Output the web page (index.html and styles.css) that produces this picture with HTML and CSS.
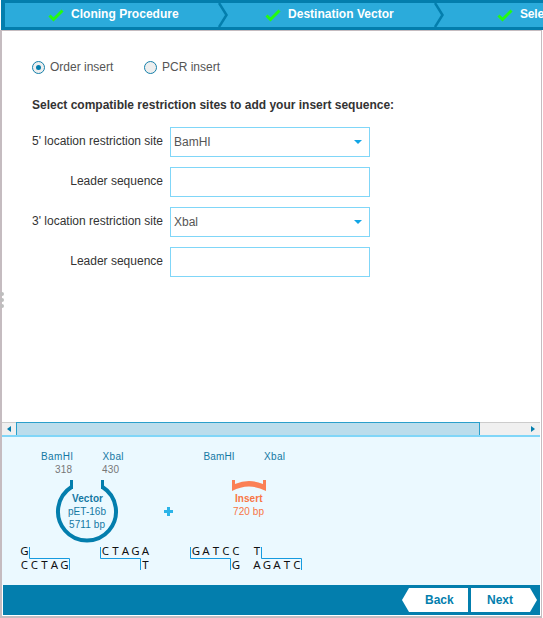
FILE: index.html
```
<!DOCTYPE html>
<html lang="en">
<head>
<meta charset="utf-8">
<title>Cloning Wizard</title>
<link rel="stylesheet" href="styles.css">
</head>
<body>
<div class="wizard">
  <header class="steps">
    <div class="step step-first">
      <svg class="check" viewBox="0 0 16 13"><path d="M1.5 6.5 5.5 10.5 14.5 1.5"/></svg>
      <span class="step-name name-cloning">Cloning Procedure</span>
      <svg class="chevron" viewBox="0 0 10 24"><path d="M1 0 8.5 12 1 24"/></svg>
    </div>
    <div class="step step-second">
      <svg class="check" viewBox="0 0 16 13"><path d="M1.5 6.5 5.5 10.5 14.5 1.5"/></svg>
      <span class="step-name name-vector">Destination Vector</span>
      <svg class="chevron" viewBox="0 0 10 24"><path d="M1 0 8.5 12 1 24"/></svg>
    </div>
    <div class="step step-third">
      <svg class="check" viewBox="0 0 16 13"><path d="M1.5 6.5 5.5 10.5 14.5 1.5"/></svg>
      <span class="step-name name-select">Sele</span>
    </div>
  </header>
  <div class="frame">
    <main class="form">
      <div class="options">
        <label class="option option-order"><span class="radio radio-on"></span><span>Order insert</span></label>
        <label class="option option-pcr"><span class="radio"></span><span>PCR insert</span></label>
      </div>
      <h1 class="prompt">Select compatible restriction sites to add your insert sequence:</h1>
      <div class="fields">
        <span class="label site">5' location restriction site</span>
        <div class="field"><span class="value">BamHI</span><i class="caret"></i></div>
        <span class="label leader">Leader sequence</span>
        <div class="field"></div>
        <span class="label site">3' location restriction site</span>
        <div class="field"><span class="value">Xbal</span><i class="caret"></i></div>
        <span class="label leader">Leader sequence</span>
        <div class="field"></div>
      </div>
    </main>
    <div class="scrollbar">
      <div class="arrow"><svg viewBox="0 0 4 6"><path d="M4 0v6L0 3z"/></svg></div>
      <div class="thumb"></div>
      <div class="track"></div>
      <div class="arrow arrow-right"><svg viewBox="0 0 4 6"><path d="M0 0v6l4-3z"/></svg></div>
    </div>
    <svg class="diagram" viewBox="2 437 538 148">
      <g class="blue">
        <text x="41" y="460" textLength="32">BamHI</text>
        <text x="102.500" y="460" textLength="21">Xbal</text>
        <text x="203.500" y="460" textLength="31">BamHI</text>
        <text x="264" y="460" textLength="21">Xbal</text>
        <text class="strong" x="72" y="502" textLength="31">Vector</text>
        <text x="68" y="515" textLength="38">pET-16b</text>
        <text x="69" y="528" textLength="36">5711 bp</text>
      </g>
      <g class="gray">
        <text x="55" y="473" textLength="17">318</text>
        <text x="102" y="473" textLength="17">430</text>
      </g>
      <path class="plasmid" d="M71.500 487A29 29 0 1 0 102.500 487"/>
      <path class="legs" d="M71.500 480V489M102.500 480V489"/>
      <path class="plus" d="M164 511.500H173M168.500 507V516"/>
      <path class="insert" d="M232 480h3v4q14-6 28 0v-4h3v11q-17-9-34 0z"/>
      <g class="orange">
        <text class="strong" x="235" y="502" textLength="27.500">Insert</text>
        <text x="233" y="515" textLength="31">720 bp</text>
      </g>
      <path class="cut" d="M29.500 547V558.500H69.500V570M100.500 547V558.500H140.500V570M190.500 547V558.500H230.500V570M261.500 547V558.500H301.500V570"/>
      <g class="bases">
        <text x="24.500" y="555">G</text>
        <text x="24.500 34.500 44.500 54.500 64.500" y="569">CCTAG</text>
        <text x="105.500 115.500 125.500 135.500 145.500" y="555">CTAGA</text>
        <text x="145.500" y="569">T</text>
        <text x="196 206 216 226 236" y="555">GATCC</text>
        <text x="236" y="569">G</text>
        <text x="257" y="555">T</text>
        <text x="257 267 277 287 297" y="569">AGATC</text>
      </g>
    </svg>
    <footer class="actions">
      <div class="button back"><span>Back</span></div>
      <div class="button next"><span>Next</span></div>
    </footer>
  </div>
  <svg class="grip" viewBox="0 0 4 16"><circle cx="2" cy="2" r="2"/><circle cx="2" cy="8" r="2"/><circle cx="2" cy="14" r="2"/></svg>
</div>
</body>
</html>
```
FILE: styles.css
```
* { box-sizing: border-box; }
body {
  margin: 0;
  background: #fff;
  font: 12px/16px "Liberation Sans", Arial, sans-serif;
  overflow: hidden;
}
.wizard {
  position: relative;
  width: 543px;
  height: 618px;
  overflow: hidden;
}
.steps {
  display: flex;
  height: 30px;
  margin-left: 1px;
  padding: 3px 0 3px 4px;
  background: #037ead;
  overflow: hidden;
}
.step {
  display: flex;
  flex: none;
  height: 24px;
  background: #2babdb;
}
.step-first { width: 223px; padding-left: 43px; }
.step-second { width: 216px; padding-left: 37px; }
.step-third { width: 140px; padding-left: 53px; }
.check { width: 16px; height: 13px; margin: 6px 7px 0 0; flex: none; }
.check path { fill: none; stroke: #23fb10; stroke-width: 3; }
.step-name {
  color: #fff;
  font-weight: bold;
  line-height: 22px;
  white-space: nowrap;
}
.name-cloning { letter-spacing: .02px; }
.name-vector { letter-spacing: .02px; }
.name-select { letter-spacing: -.2px; }
.chevron { width: 10px; height: 24px; margin-left: auto; }
.chevron path { fill: none; stroke: #037ead; stroke-width: 2.500; }
.frame {
  width: 542px;
  height: 588px;
  border: 1px solid #c5bcc0;
  border-left-width: 2px;
  border-bottom-width: 2px;
}
.form { height: 391px; padding: 28px 0 0 30px; }
.options { display: flex; height: 16px; color: #555; }
.option { display: flex; align-items: center; white-space: nowrap; }
.option-order { width: 112px; }
.radio {
  display: grid;
  place-items: center;
  width: 13px;
  height: 13px;
  margin-right: 5px;
  border: 1px solid #1580aa;
  border-radius: 50%;
  background: #eee;
}
.radio-on::after {
  content: "";
  width: 5px;
  height: 5px;
  border-radius: 50%;
  background: #037ead;
}
.prompt {
  margin: 22px 0 14px;
  color: #333;
  font-size: 12px;
  line-height: 16px;
  white-space: nowrap;
}
.fields {
  display: grid;
  grid-template-columns: 131px 200px;
  column-gap: 7px;
  row-gap: 10px;
}
.label {
  color: #333;
  line-height: 28px;
  text-align: right;
  white-space: nowrap;
}
.field {
  display: flex;
  align-items: center;
  justify-content: space-between;
  height: 30px;
  padding: 0 7px 0 3px;
  border: 1px solid #80d6f8;
  color: #555;
}
.caret {
  border: 4px solid transparent;
  border-top: 4px solid #12a5e5;
  border-bottom: 0;
}
.scrollbar {
  display: flex;
  width: 538px;
  height: 15px;
  border-bottom: 2px solid #80d6f8;
}
.arrow {
  display: grid;
  place-items: center;
  width: 14px;
  background: #f0f0f0;
  border-top: 1px solid #ccc;
}
.arrow svg { width: 4px; height: 6px; fill: #037ead; }
.thumb {
  width: 464px;
  border: 1px solid #2a9fcb;
  border-bottom: 0;
  background: #bbddec;
}
.track { flex: 1; background: #f0f0f0; border-top: 1px solid #ccc; }
.diagram {
  display: block;
  width: 538px;
  height: 148px;
  background: #ebf9ff;
}
.diagram text { font-family: "Liberation Sans", Arial, sans-serif; font-size: 10px; }
.diagram .strong { font-weight: bold; }
.blue { fill: #1478a3; }
.gray { fill: #777; }
.orange { fill: #f87545; }
.plasmid { fill: none; stroke: #037ead; stroke-width: 4; }
.legs { stroke: #037ead; stroke-width: 3; }
.plus { stroke: #2bb4e8; stroke-width: 3; }
.insert { fill: #fb8055; }
.cut { fill: none; stroke: #169bdf; stroke-width: 1; }
.diagram .bases text {
  font-family: "Noto Sans", "Open Sans", sans-serif;
  font-size: 11.500px;
  fill: #111;
  text-anchor: middle;
}
.actions {
  display: flex;
  justify-content: flex-end;
  gap: 3px;
  width: 537px;
  height: 30px;
  margin-left: 1px;
  padding: 3px 3px 3px 0;
  background: #037ead;
}
.button {
  width: 66px;
  height: 24px;
  background: #fff;
  color: #037ead;
  font-weight: bold;
  line-height: 24px;
}
.back { padding-left: 23px; clip-path: polygon(0 50%, 7px 0, 100% 0, 100% 100%, 7px 100%); }
.next { padding-left: 16px; clip-path: polygon(0 0, 59px 0, 100% 50%, 59px 100%, 0 100%); }
.grip {
  position: absolute;
  left: 0;
  top: 292px;
  width: 4px;
  height: 16px;
  fill: #bdbdbd;
}
```
